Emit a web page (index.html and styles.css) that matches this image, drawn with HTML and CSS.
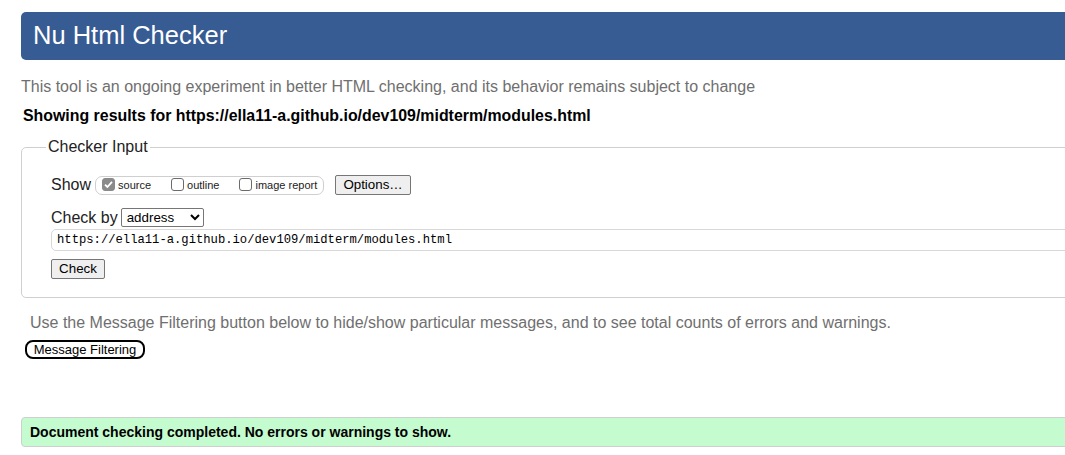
FILE: index.html
```html
<!DOCTYPE html>
<html lang="en">
<head>
<meta charset="utf-8">
<title>Nu Html Checker</title>
<link rel="stylesheet" href="styles.css">
</head>
<body>
<div class="page">
  <h1 class="title">Nu Html Checker</h1>
  <p class="intro">This tool is an ongoing experiment in better HTML checking, and its behavior remains subject to change</p>
  <p class="results">Showing results for https://ella11-a.github.io/dev109/midterm/modules.html</p>
  <fieldset class="input-box">
    <legend class="legend">Checker Input</legend>
    <div class="row show-row">
      <span class="row-label">Show</span>
      <span class="opts">
        <span class="opt"><span class="cb checked"><svg viewBox="0 0 13 13" width="13" height="13"><path d="M3 6.6 L5.4 9 L10 3.8" fill="none" stroke="#fff" stroke-width="1.8"/></svg></span><span class="opt-label">source</span></span>
        <span class="opt"><span class="cb"></span><span class="opt-label">outline</span></span>
        <span class="opt"><span class="cb"></span><span class="opt-label">image report</span></span>
      </span>
      <button class="btn options-btn" type="button">Options…</button>
    </div>
    <div class="row checkby-row">
      <span class="row-label">Check by</span>
      <select class="select"><option>address</option></select>
    </div>
    <input class="url" type="text" value="https://ella11-a.github.io/dev109/midterm/modules.html">
    <button class="btn check-btn" type="button">Check</button>
  </fieldset>
  <p class="filter-note">Use the Message Filtering button below to hide/show particular messages, and to see total counts of errors and warnings.</p>
  <button class="filter-btn" type="button">Message Filtering</button>
  <div class="success">Document checking completed. No errors or warnings to show.</div>
</div>
</body>
</html>
```

FILE: styles.css
```css
html, body {
  margin: 0;
  padding: 0;
  overflow: hidden;
  background: #fff;
}
body {
  font-family: "Liberation Sans", Arial, sans-serif;
  color: #000;
}
.page {
  width: 1100px;
  padding: 12px 0 0 21px;
}
.title {
  margin: 0;
  height: 48px;
  box-sizing: border-box;
  padding: 9px 0 0 12px;
  background: #375b93;
  color: #fff;
  font-weight: normal;
  font-size: 25.5px;
  line-height: 28px;
  border-radius: 5px;
}
.intro {
  margin: 18px 0 0 0;
  font-size: 16px;
  line-height: 18px;
  color: #6f6f6f;
}
.results {
  margin: 11px 0 0 2px;
  font-size: 15.9px;
  line-height: 18px;
  font-weight: bold;
}
.input-box {
  margin: 13px 0 0 0;
  border: 1px solid #cfcfcf;
  border-radius: 5px;
  padding: 8px 0 18px 29px;
  min-width: 0;
}
.legend {
  margin-left: -5px;
  padding: 0 2px;
  font-size: 16px;
  line-height: 18px;
  color: #222;
}
.row {
  display: flex;
  align-items: center;
}
.row-label {
  font-size: 16px;
  line-height: 18px;
  color: #222;
}
.opts {
  display: flex;
  align-items: center;
  margin-left: 4px;
  height: 19px;
  box-sizing: border-box;
  width: 229px;
  border: 1px solid #cfcfcf;
  border-radius: 7px;
  padding: 0 0 0 6px;
}
.opt {
  display: flex;
  align-items: center;
  margin-right: 20px;
}
.opt:last-child {
  margin-right: 0;
}
.cb {
  display: inline-block;
  width: 13px;
  height: 13px;
  box-sizing: border-box;
  border: 1px solid #6b6b6b;
  border-radius: 3px;
  background: #fff;
  position: relative;
  top: -1px;
}
.cb.checked {
  background: #8a8a8a;
  border-color: #8a8a8a;
}
.cb svg {
  display: block;
  margin: -1px 0 0 -1px;
}
.opt-label {
  font-size: 11px;
  line-height: 13px;
  margin-left: 3px;
  color: #222;
}
.btn {
  font-family: "Liberation Sans", Arial, sans-serif;
  font-size: 13.33px;
  background: #efefef;
  border: 1px solid #767676;
  border-radius: 2px;
  color: #000;
  padding: 0 6px;
  height: 20px;
  line-height: 16px;
}
.options-btn {
  margin-left: 11px;
  width: 76px;
}
.show-row {
  margin-top: 11px;
}
.checkby-row {
  margin-top: 13px;
}
.select {
  margin-left: 3px;
  width: 83px;
  height: 19px;
  font-family: "Liberation Sans", Arial, sans-serif;
  font-size: 13.33px;
  border: 1px solid #767676;
  border-radius: 2px;
  background: #fff;
  color: #000;
  padding: 0 0 0 1px;
}
.url {
  display: block;
  margin-top: 2px;
  width: 1100px;
  height: 22px;
  box-sizing: border-box;
  border: 1px solid #d8d8d8;
  border-radius: 5px;
  padding: 0 5px;
  font-family: "Liberation Mono", Consolas, monospace;
  font-size: 12.2px;
  color: #000;
}
.check-btn {
  display: block;
  margin-top: 8px;
  width: 54px;
}
.filter-note {
  margin: 16px 0 0 9px;
  font-size: 16px;
  line-height: 18px;
  color: #6f6f6f;
}
.filter-btn {
  display: block;
  margin: 8px 0 0 4px;
  height: 19px;
  width: 120px;
  box-sizing: border-box;
  border: 2px solid #000;
  border-radius: 8px;
  background: #fff;
  padding: 0;
  font-family: "Liberation Sans", Arial, sans-serif;
  font-size: 13px;
  line-height: 15px;
  color: #000;
}
.success {
  margin-top: 58px;
  height: 30px;
  box-sizing: border-box;
  background: #c4fcd0;
  border: 1px solid #cfcfcf;
  border-radius: 4px;
  padding: 6px 0 0 8px;
  font-size: 14px;
  line-height: 16px;
  font-weight: bold;
}
```
